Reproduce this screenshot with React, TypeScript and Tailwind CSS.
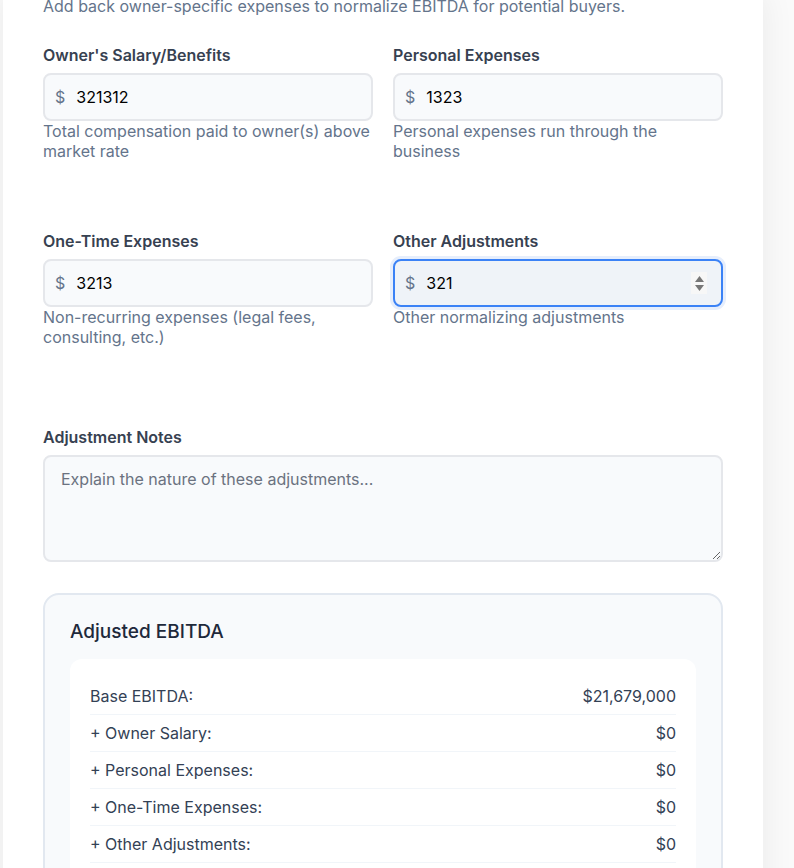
import React from "react";

function MoneyField({ label, value, help, focused }: any) {
  return (
    <div>
      <label className="block text-base leading-5 font-semibold text-[#374151] mb-2">{label}</label>
      <div
        className={
          focused
            ? "flex items-center h-12 rounded-lg border-2 border-[#3b82f6] bg-[#eff3f8] px-[10px] gap-3 ring-[3px] ring-[#e6eefc]"
            : "flex items-center h-12 rounded-lg border-2 border-[#e5e7eb] bg-[#f8fafc] px-[10px] gap-3"
        }
      >
        <span className="text-[#64748b] text-base">$</span>
        <input
          readOnly
          value={value}
          className="flex-1 min-w-0 bg-transparent outline-none text-base text-black -ml-px"
        />
        {focused && (
          <span className="flex flex-col items-center justify-center gap-[3px] w-[16px] h-[22px] bg-[#f7f7f7] mr-[4px]">
            <svg width="9" height="6" viewBox="0 0 9 6"><path d="M4.5 0 L9 6 L0 6 Z" fill="#777" /></svg>
            <svg width="9" height="6" viewBox="0 0 9 6"><path d="M0 0 L9 0 L4.5 6 Z" fill="#777" /></svg>
          </span>
        )}
      </div>
      <p className="text-base leading-5 text-[#64748b]">{help}</p>
    </div>
  );
}

export default function App() {
  const rows = [
    ["Base EBITDA:", "$21,679,000"],
    ["+ Owner Salary:", "$0"],
    ["+ Personal Expenses:", "$0"],
    ["+ One-Time Expenses:", "$0"],
    ["+ Other Adjustments:", "$0"],
  ];

  return (
    <div className="h-screen overflow-hidden bg-[#fafafa] font-['Inter',sans-serif]">
      <div className="ml-[3px] w-[760px] min-h-full bg-white shadow-[0_0_32px_rgba(0,0,0,0.07)] px-10">
        <p className="-mt-[6px] text-base leading-6 text-[#64748b] mb-[27px]">
          Add back owner-specific expenses to normalize EBITDA for potential buyers.
        </p>

        <div className="grid grid-cols-2 gap-x-5 gap-y-[70px]">
          <MoneyField
            label="Owner's Salary/Benefits"
            value="321312"
            help="Total compensation paid to owner(s) above market rate"
          />
          <MoneyField
            label="Personal Expenses"
            value="1323"
            help="Personal expenses run through the business"
          />
          <MoneyField
            label="One-Time Expenses"
            value="3213"
            help="Non-recurring expenses (legal fees, consulting, etc.)"
          />
          <MoneyField
            label="Other Adjustments"
            value="321"
            help="Other normalizing adjustments"
            focused
          />
        </div>

        <div className="mt-[80px]">
          <label className="block text-base leading-5 font-semibold text-[#374151] mb-2">Adjustment Notes</label>
          <textarea
            placeholder="Explain the nature of these adjustments..."
            className="block w-full h-[107px] rounded-lg border-2 border-[#e5e7eb] bg-[#f8fafc] px-4 pt-[10px] pb-3 text-base text-[#111827] placeholder:text-[#6b7280] outline-none"
          />
        </div>

        <div className="mt-[31px] rounded-2xl border-2 border-[#e2e8f0] bg-[#f8fafc] p-[25px]">
          <h3 className="text-[19px] leading-6 font-medium text-[#1e293b] mb-[15px]">Adjusted EBITDA</h3>
          <div className="rounded-xl bg-white px-5 pt-[19px] pb-5">
            {rows.map((r, i) => (
              <div key={i} className="flex justify-between py-2 border-b border-[#f1f5f9] text-base leading-5 text-[#334155]">
                <span>{r[0]}</span>
                <span>{r[1]}</span>
              </div>
            ))}
            <div className="flex justify-between pt-3 text-base leading-6 font-semibold text-[#0f172a]">
              <span>Adjusted EBITDA:</span>
              <span>$21,679,000</span>
            </div>
          </div>
        </div>
      </div>
    </div>
  );
}
